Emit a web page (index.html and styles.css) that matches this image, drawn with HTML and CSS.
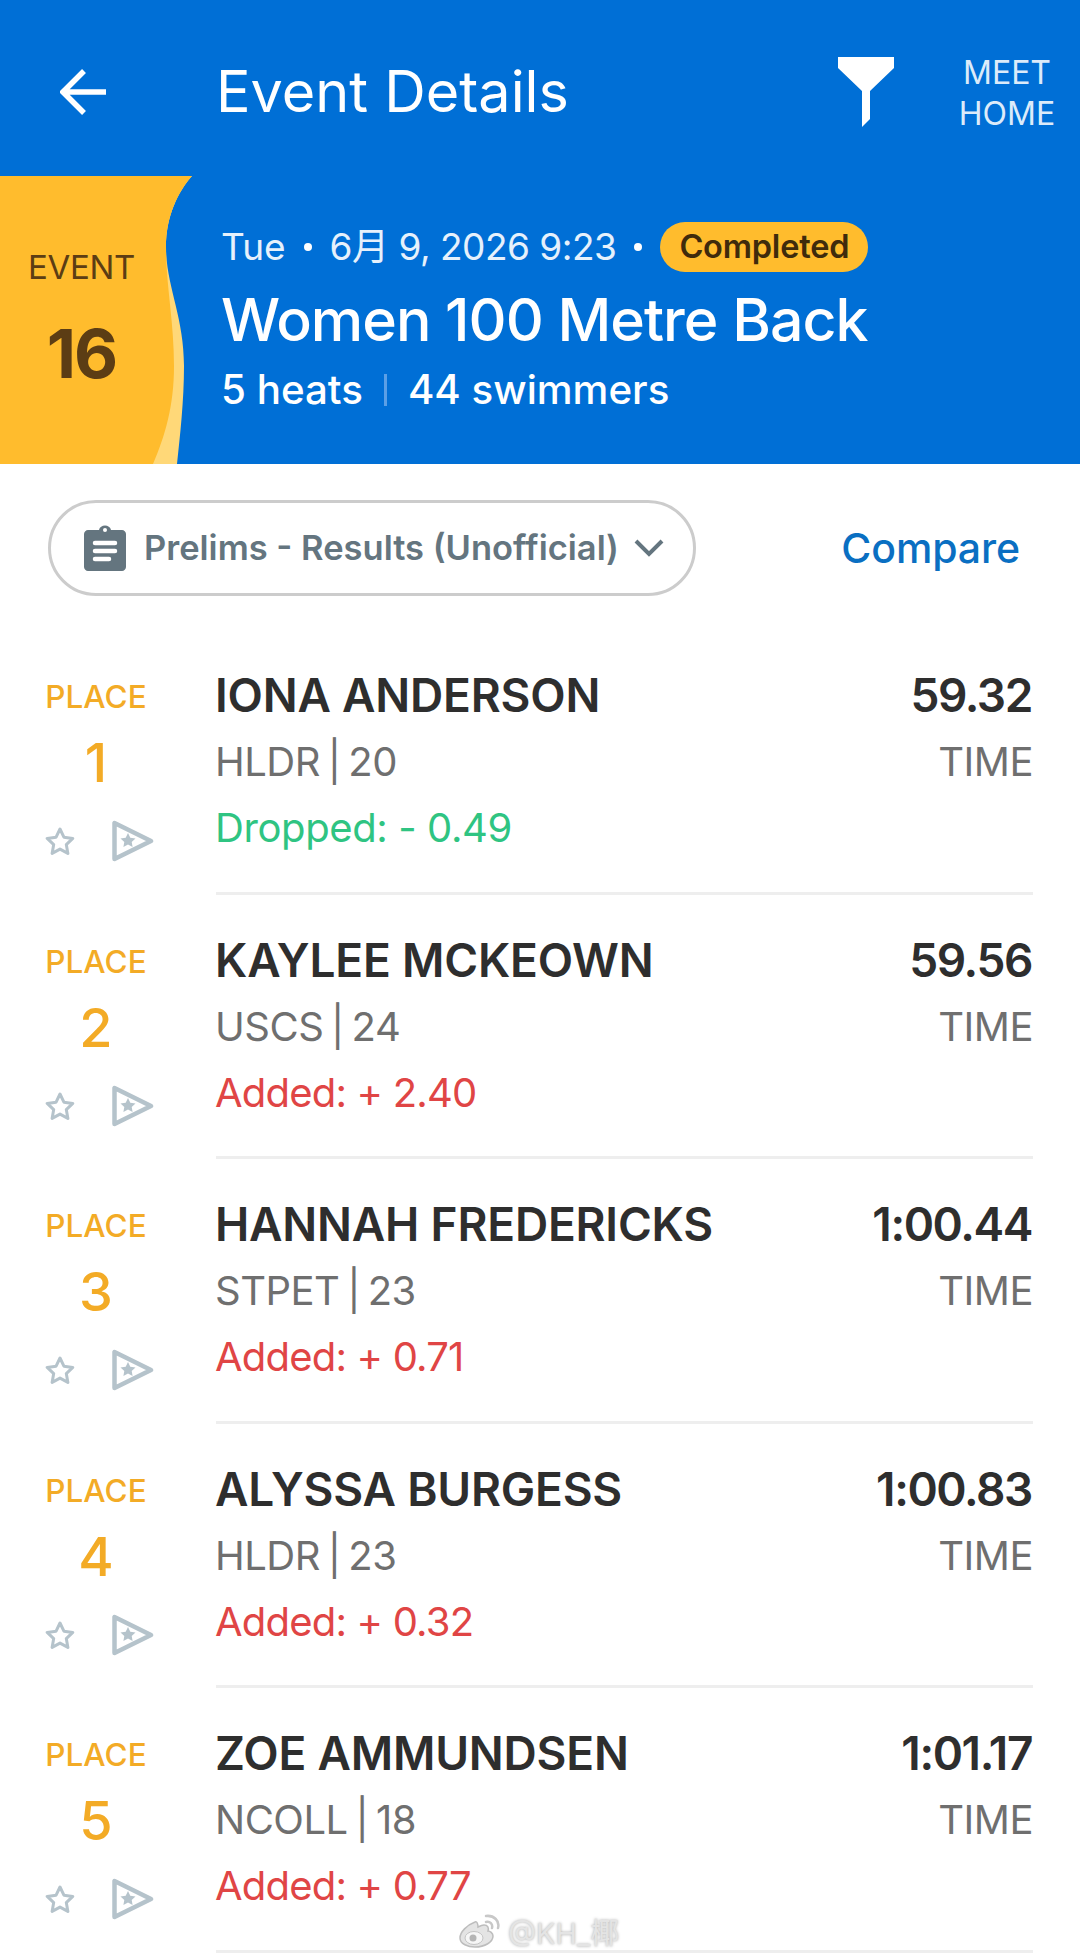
FILE: index.html
```html
<!DOCTYPE html>
<html lang="en">
<head>
  <meta charset="UTF-8" />
  <meta name="viewport" content="width=device-width, initial-scale=1.0" />
  <title>Event Details</title>
  <link rel="stylesheet" href="styles.css">
</head>
<body>
  <svg class="icon-defs" width="0" height="0">
    <defs>
      <symbol id="star" viewBox="0 0 30 28">
        <path d="M15 2l3.9 8.2 8.9 1.2-6.5 6.2 1.6 8.8L15 22.1l-7.900 4.300 1.600-8.800-6.500-6.200 8.900-1.200z" fill="none" stroke="#b5c3cb" stroke-width="3" stroke-linejoin="round"/>
      </symbol>
      <symbol id="flag" viewBox="0 0 42 42">
        <path d="M2.500 3v36L39 21z" fill="none" stroke="#b5c3cb" stroke-width="4.500" stroke-linejoin="round"/>
        <path d="M16 13l2.300 4.700 5.200.7-3.800 3.600.9 5.100-4.600-2.500-4.600 2.500.9-5.100-3.800-3.600 5.200-.7z" fill="#b5c3cb"/>
      </symbol>
    </defs>
  </svg>

  <header class="app-bar">
    <svg class="back-icon" viewBox="0 0 48 48" width="48" height="48">
      <path d="M46 24H5M24 3L3 24l21 21" fill="none" stroke="#fff" stroke-width="5.500"/>
    </svg>
    <h1>Event Details</h1>
    <svg class="filter-icon" viewBox="0 0 56 70" width="56" height="70">
      <path d="M0 0h56v11L32 34v28l-8 8V34L0 11z" fill="#fff"/>
    </svg>
    <div class="meet-home">MEET<br>HOME</div>
  </header>

  <section class="event-band">
    <div class="event-badge">
      <svg class="event-wave" viewBox="0 0 192 288" width="192" height="288">
        <path d="M0 0H192C178 16 166 40 166 71C166 110 184 140 184 190C184 225 180 260 177 288H0Z" fill="#ffd878"/>
        <path d="M0 0H192C178 16 166 40 166 71C166 110 174 145 174 190C174 230 165 260 153 288H0Z" fill="#ffbc2d"/>
      </svg>
      <span class="event-label">EVENT</span>
      <span class="event-number">16</span>
    </div>
    <div class="event-info">
      <div class="event-date">
        <span>Tue</span><span class="dot"></span><span class="event-when">6月 9, 2026 9:23</span><span class="dot"></span>
        <span class="status">Completed</span>
      </div>
      <h2>Women 100 Metre Back</h2>
      <div class="event-counts"><span>5 heats</span><i></i><span>44 swimmers</span></div>
    </div>
  </section>

  <div class="toolbar">
    <div class="round-pill">
      <svg viewBox="0 0 42 46" width="42" height="46">
        <path d="M4 5h11c1-6 11-6 12 0h11c2 0 4 2 4 4v33c0 2-2 4-4 4H4c-2 0-4-2-4-4V9c0-2 2-4 4-4z" fill="#64757f"/>
        <circle cx="21" cy="5" r="2" fill="#fff"/>
        <path d="M11 18h20M11 26h20M11 34h14" stroke="#fff" stroke-width="4.500" stroke-linecap="round"/>
      </svg>
      <span>Prelims - Results (Unofficial)</span>
      <svg class="chevron" viewBox="0 0 30 20" width="30" height="20">
        <path d="M2 3l13 13L28 3" fill="none" stroke="#64757f" stroke-width="4"/>
      </svg>
    </div>
    <a class="compare">Compare</a>
  </div>

  <main class="results">
    <div class="row">
      <div class="place">
        <span class="place-label">PLACE</span>
        <span class="place-number">1</span>
        <div class="place-icons"><svg class="star"><use href="#star"/></svg><svg class="flag"><use href="#flag"/></svg></div>
      </div>
      <div class="swimmer">
        <div class="line"><span class="name">IONA ANDERSON</span><span class="result">59.32</span></div>
        <div class="line"><span class="team">HLDR | 20</span><span class="team">TIME</span></div>
        <div class="line dropped">Dropped: - 0.49</div>
      </div>
    </div>
    <div class="row">
      <div class="place">
        <span class="place-label">PLACE</span>
        <span class="place-number">2</span>
        <div class="place-icons"><svg class="star"><use href="#star"/></svg><svg class="flag"><use href="#flag"/></svg></div>
      </div>
      <div class="swimmer">
        <div class="line"><span class="name">KAYLEE MCKEOWN</span><span class="result">59.56</span></div>
        <div class="line"><span class="team">USCS | 24</span><span class="team">TIME</span></div>
        <div class="line added">Added: + 2.40</div>
      </div>
    </div>
    <div class="row">
      <div class="place">
        <span class="place-label">PLACE</span>
        <span class="place-number">3</span>
        <div class="place-icons"><svg class="star"><use href="#star"/></svg><svg class="flag"><use href="#flag"/></svg></div>
      </div>
      <div class="swimmer">
        <div class="line"><span class="name">HANNAH FREDERICKS</span><span class="result">1:00.44</span></div>
        <div class="line"><span class="team">STPET | 23</span><span class="team">TIME</span></div>
        <div class="line added">Added: + 0.71</div>
      </div>
    </div>
    <div class="row">
      <div class="place">
        <span class="place-label">PLACE</span>
        <span class="place-number">4</span>
        <div class="place-icons"><svg class="star"><use href="#star"/></svg><svg class="flag"><use href="#flag"/></svg></div>
      </div>
      <div class="swimmer">
        <div class="line"><span class="name">ALYSSA BURGESS</span><span class="result">1:00.83</span></div>
        <div class="line"><span class="team">HLDR | 23</span><span class="team">TIME</span></div>
        <div class="line added">Added: + 0.32</div>
      </div>
    </div>
    <div class="row">
      <div class="place">
        <span class="place-label">PLACE</span>
        <span class="place-number">5</span>
        <div class="place-icons"><svg class="star"><use href="#star"/></svg><svg class="flag"><use href="#flag"/></svg></div>
      </div>
      <div class="swimmer">
        <div class="line"><span class="name">ZOE AMMUNDSEN</span><span class="result">1:01.17</span></div>
        <div class="line"><span class="team">NCOLL | 18</span><span class="team">TIME</span></div>
        <div class="line added">Added: + 0.77</div>
      </div>
    </div>
  </main>

  <!-- Watermark -->
  <div class="watermark">
    <svg viewBox="0 0 42 34" width="42" height="34">
      <path d="M16 8C8 11 1 18 1 24c0 6 8 9 15 9 10 0 18-5 18-11 0-3-3-5-5-5 1-3 0-6-4-6-2 0-4 1-6 2 0-3-1-6-3-5z" fill="#e4e4e4" stroke="#bdbdbd" stroke-width="1.500"/>
      <ellipse cx="15" cy="24" rx="9" ry="6.500" fill="#f6f6f6" stroke="#c4c4c4"/>
      <circle cx="14" cy="24" r="3.500" fill="#b5b5b5"/>
      <path d="M27 8c4-1 7 2 6 6M27 2c8-1 14 5 12 12" fill="none" stroke="#c8c8c8" stroke-width="2.500" stroke-linecap="round"/>
    </svg>
    <span>@KH_椰</span>
  </div>
</body>
</html>
```

FILE: styles.css
```css
body { margin: 0; background: #fff; font-family: Inter, "Noto Sans CJK SC", sans-serif; color: #2e2e2e; position: relative; overflow: hidden; }
.icon-defs { position: absolute; }

.app-bar { height: 176px; background: #006fd6; color: #fff; display: flex; align-items: center; box-sizing: border-box; padding: 8px 24px 0 60px; }
.app-bar h1 { flex: 1; margin: 0 0 0 108px; font-size: 57.500px; font-weight: 400; line-height: 1; }
.filter-icon { margin-right: 64px; }
.meet-home { width: 98px; font-size: 32px; line-height: 41px; text-align: center; color: #dcebfa; margin-top: 2px; }

.event-band { height: 288px; background: #006fd6; display: flex; color: #fff; }
.event-badge { position: relative; width: 222px; flex-shrink: 0; display: flex; flex-direction: column; color: #5c3d14; }
.event-wave { position: absolute; left: 0; top: 0; }
.event-label { position: relative; width: 163px; text-align: center; margin-top: 69px; font-size: 33px; line-height: 44px; letter-spacing: -0.300px; }
.event-number { position: relative; width: 163px; text-align: center; margin-top: 29px; font-size: 68px; font-weight: 700; line-height: 70px; letter-spacing: -2px; }
.event-info { padding-top: 46px; margin-left: -1px; }
.event-date { display: flex; align-items: center; font-size: 37px; line-height: 44px; color: #e6f1fc; }
.event-when { letter-spacing: -0.500px; }
.dot { width: 8px; height: 8px; border-radius: 50%; background: #fff; margin: 0 18px; }
.status { background: #ffbc2d; color: #3f2b0c; font-size: 32.500px; font-weight: 600; letter-spacing: -0.200px; border-radius: 26px; padding: 0 19px; height: 50px; line-height: 50px; }
.event-info h2 { margin: 13px 0 0; font-size: 59px; font-weight: 500; line-height: 70px; letter-spacing: -1px; }
.event-counts { display: flex; align-items: center; margin-top: 10px; font-size: 40.300px; font-weight: 500; line-height: 50px; }
.event-counts i { width: 3px; height: 32px; background: #5b9fe6; margin: 0 21px; }

.toolbar { display: flex; align-items: center; justify-content: space-between; padding: 36px 60px 0 48px; }
.round-pill { width: 648px; height: 96px; box-sizing: border-box; border: 3px solid #ccc; border-radius: 48px; display: flex; align-items: center; padding-left: 33px; color: #64757f; font-size: 34.500px; font-weight: 600; }
.round-pill span { margin: -2px 15px 0 18px; }
.compare { color: #0a6fc2; font-size: 41px; font-weight: 500; letter-spacing: -0.100px; }

.results { margin-top: 34px; }
.row { display: flex; height: 264.600px; box-sizing: border-box; }
.place { width: 216px; flex-shrink: 0; display: flex; flex-direction: column; padding-top: 45px; box-sizing: border-box; color: #f3ab26; }
.place-label { width: 192px; text-align: center; font-size: 31.500px; font-weight: 500; line-height: 44px; }
.place-number { width: 192px; text-align: center; font-size: 54px; font-weight: 500; line-height: 66px; margin-top: 11px; }
.place-icons { display: flex; align-items: center; gap: 37px; padding-left: 45px; margin-top: 24px; }
.star { width: 30px; height: 28px; }
.flag { width: 42px; height: 42px; }

.swimmer { flex: 1; margin-right: 47px; padding-top: 32px; border-bottom: 3px solid #eee; box-sizing: border-box; }
.line { display: flex; justify-content: space-between; font-size: 40px; line-height: 66px; color: #6f6f6f; }
.line:first-child { margin-bottom: 1px; }
.name { font-size: 46px; font-weight: 600; color: #2e2e2e; letter-spacing: -0.200px; margin-left: -1px; }
.result { font-size: 46px; font-weight: 600; color: #2e2e2e; letter-spacing: -1.400px; margin-right: 1px; }
.team { letter-spacing: -0.500px; word-spacing: -3px; margin-left: -1px; }
.dropped { color: #2fc482; letter-spacing: -0.400px; margin-left: -1px; }
.added { color: #e04545; letter-spacing: -0.800px; margin-left: -1px; }

.watermark { position: absolute; left: 459px; top: 1910px; display: flex; align-items: center; gap: 7px; font-size: 29px; color: #e4e4e4; text-shadow: 0 0 3px #a8a8a8; }
```
